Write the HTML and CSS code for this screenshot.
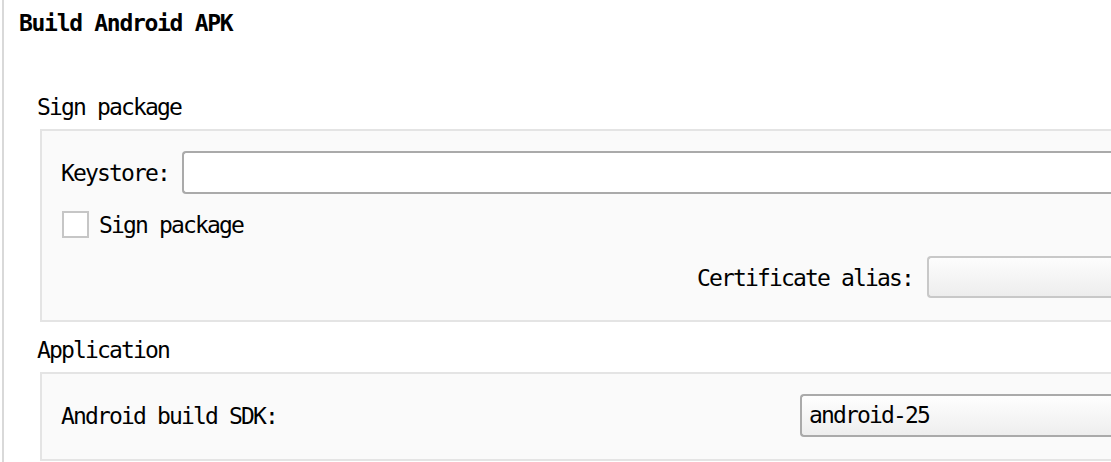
FILE: index.html
```html
<!DOCTYPE html>
<html>
<head>
<meta charset="utf-8">
<title>Build Android APK</title>
<link rel="stylesheet" href="styles.css">
</head>
<body>
<div class="page">
  <h1 class="title">Build Android APK</h1>

  <section class="group">
    <div class="legend">Sign package</div>
    <div class="box">
      <div class="row row-keystore">
        <label class="label">Keystore:</label>
        <div class="field field-text"></div>
      </div>
      <div class="row row-check">
        <span class="checkbox"></span>
        <span class="check-text">Sign package</span>
      </div>
      <div class="row row-alias">
        <label class="label label-alias">Certificate alias:</label>
        <div class="field field-combo field-alias"></div>
      </div>
    </div>
  </section>

  <section class="group group-app">
    <div class="legend">Application</div>
    <div class="box">
      <div class="row row-sdk">
        <label class="label">Android build SDK:</label>
        <div class="field field-select"><span class="select-text">android-25</span></div>
      </div>
    </div>
  </section>
</div>
</body>
</html>
```

FILE: styles.css
```css
* {
  box-sizing: border-box;
}

html, body {
  margin: 0;
  padding: 0;
  background: #ffffff;
  overflow: hidden;
}

body {
  font-family: "DejaVu Sans Mono", "Liberation Mono", monospace;
  font-size: 23px;
  line-height: 27px;
  letter-spacing: -1.846px;
  color: #000000;
}

/* The panel continues past the right edge of the window: its right-hand
   borders are not in view, so boxes and fields simply run to the edge. */
.page {
  margin-left: 2px;
  border-left: 2px solid #d9d9d9;
  padding-left: 15px;
  padding-top: 10px;
  height: 462px;
}

.title {
  margin: 0 0 57px 0;
  font-size: 23px;
  line-height: 27px;
  font-weight: bold;
  letter-spacing: -1.3px;
}

.group {
  padding-left: 21px;
}

.group-app {
  margin-top: 15px;
}

.legend {
  margin-left: -3px;
  height: 27px;
}

.box {
  margin-top: 8px;
  border: 2px solid #e4e4e4;
  border-right: 0;
  background: #fafafa;
  padding: 20px 0 22px 20px;
}

.row {
  display: flex;
  align-items: center;
}

.label {
  margin-left: -1px;
  padding-top: 2px;
  white-space: nowrap;
}

.row-keystore .label {
  margin-right: 13px;
}

.row-check {
  margin-top: 17px;
  height: 27px;
  align-items: flex-start;
}

.row-alias {
  margin-top: 18px;
}

.label-alias {
  margin-left: auto;
  margin-right: 14px;
}

.field {
  border-radius: 4px 0 0 4px;
  border-right: 0 !important;
}

.field-text {
  flex: 1;
  height: 43px;
  background: #ffffff;
  border: 2px solid #aaaaaa;
}

.field-combo {
  height: 42px;
  border: 2px solid #c8c8c8;
  background: linear-gradient(#fdfdfd, #ededed);
}

.field-alias {
  width: 184px;
}

.checkbox {
  width: 27px;
  height: 27px;
  border: 2px solid #c6c6c6;
  background: #ffffff;
  margin-right: 10px;
}

.check-text {
  white-space: nowrap;
  padding-top: 1px;
}

.field-select {
  margin-left: auto;
  width: 311px;
  height: 43px;
  border: 2px solid #aaaaaa;
  background: linear-gradient(#fefefe, #eeeeee);
  display: flex;
  align-items: center;
  padding-left: 7px;
}

.select-text {
  white-space: nowrap;
}
```
